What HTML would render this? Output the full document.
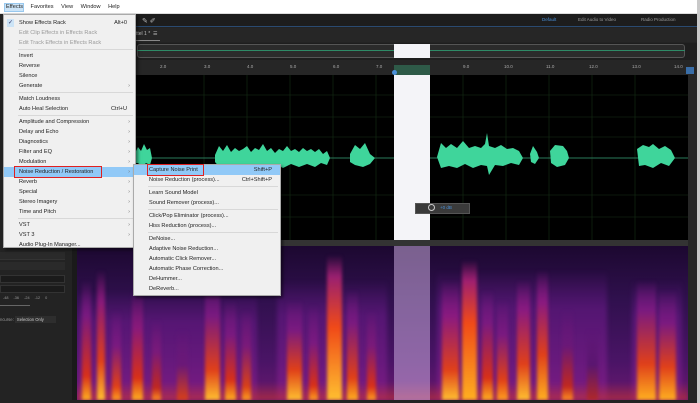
<!DOCTYPE html>
<html><head><meta charset="utf-8"><style>
*{margin:0;padding:0;box-sizing:border-box}
body{width:700px;height:403px;overflow:hidden;background:#fff;position:relative;font-family:"Liberation Sans",sans-serif}
.a{position:absolute}
.menu{position:absolute;background:#f0f0f0;border:1px solid #aaa;box-shadow:2px 2px 3px rgba(0,0,0,.5);font-size:5.6px;color:#222}
.it{position:absolute;left:0;right:0;height:10px;line-height:10px;padding-left:15px}
.it.d{color:#999}
.it .k{position:absolute;right:8px;top:0}
.it .r{position:absolute;right:5px;top:0;color:#777}
.sep{position:absolute;left:14px;right:2px;height:1px;background:#d8d8d8}
.s{position:absolute;bottom:0;filter:blur(1.5px)}
.p{position:absolute;bottom:0;filter:blur(2px);background:linear-gradient(transparent,#6a1a88 30%,#8a2090)}
</style></head><body>
<div class="a" style="left:0;top:0;width:700px;height:14px;background:#fff;border-bottom:1px solid #ddd"></div>
<div class="a" style="left:4px;top:3px;width:20px;height:9px;background:#cce4f7;border:1px solid #99c9ef"></div>
<div class="a" style="left:6px;top:4px;font-size:5.6px;color:#222;word-spacing:6px">Effects Favorites View Window Help</div>
<div class="a" style="left:0;top:14px;width:697px;height:389px;background:#232323"></div>
<div class="a" style="left:697px;top:0;width:3px;height:403px;background:#c9c9c9"></div>
<div class="a" style="left:135px;top:14px;width:562px;height:13px;background:#1d1d1d;border-bottom:1px solid #2a4a70"></div>
<div class="a" style="left:542px;top:17px;font-size:4.5px;color:#4a90d9">Default</div>
<div class="a" style="left:578px;top:17px;font-size:4.5px;color:#999">Edit Audio to Video</div>
<div class="a" style="left:641px;top:17px;font-size:4.5px;color:#999">Radio Production</div>
<div class="a" style="left:142px;top:17px;font-size:7px;color:#bbb">✎ ✐</div>
<div class="a" style="left:135px;top:28px;width:562px;height:14px;background:#262626"></div>
<div class="a" style="left:136px;top:31px;font-size:5px;color:#bbb">ttel 1 * &nbsp;☰</div>
<div class="a" style="left:135px;top:40px;width:25px;height:1px;background:#888"></div>
<div class="a" style="left:135px;top:43px;width:562px;height:17px;background:#1e1e1e"></div>
<div class="a" style="left:137px;top:44px;width:548px;height:14px;border:1px solid #555;border-radius:3px;background:#2b2b2b"></div>
<div class="a" style="left:137px;top:50px;width:548px;height:1px;background:#2e8a66"></div>
<div class="a" style="left:394px;top:44px;width:36px;height:14px;background:#f4f4f8"></div>
<div class="a" style="left:135px;top:60px;width:553px;height:15px;background:#262626"></div>
<div class="a" style="left:160px;top:64px;font-size:4.5px;color:#aaa">2.0</div>
<div class="a" style="left:204px;top:64px;font-size:4.5px;color:#aaa">3.0</div>
<div class="a" style="left:247px;top:64px;font-size:4.5px;color:#aaa">4.0</div>
<div class="a" style="left:290px;top:64px;font-size:4.5px;color:#aaa">5.0</div>
<div class="a" style="left:333px;top:64px;font-size:4.5px;color:#aaa">6.0</div>
<div class="a" style="left:376px;top:64px;font-size:4.5px;color:#aaa">7.0</div>
<div class="a" style="left:463px;top:64px;font-size:4.5px;color:#aaa">9.0</div>
<div class="a" style="left:504px;top:64px;font-size:4.5px;color:#aaa">10.0</div>
<div class="a" style="left:546px;top:64px;font-size:4.5px;color:#aaa">11.0</div>
<div class="a" style="left:589px;top:64px;font-size:4.5px;color:#aaa">12.0</div>
<div class="a" style="left:632px;top:64px;font-size:4.5px;color:#aaa">13.0</div>
<div class="a" style="left:674px;top:64px;font-size:4.5px;color:#aaa">14.0</div>
<div class="a" style="left:394px;top:65px;width:36px;height:10px;background:#2e5a48"></div>
<div class="a" style="left:392px;top:70px;width:5px;height:5px;border-radius:50%;background:#4a90d9"></div>
<div class="a" style="left:135px;top:75px;width:553px;height:165px;background:#000"></div>
<svg class="a" style="left:135px;top:75px" width="553" height="165">
<g stroke="#163016" stroke-width="0.6">
<line x1="0" y1="20" x2="553" y2="20"/><line x1="0" y1="42" x2="553" y2="42"/><line x1="0" y1="62" x2="553" y2="62"/><line x1="0" y1="120" x2="553" y2="120"/><line x1="0" y1="142" x2="553" y2="142"/>
<line x1="69" y1="0" x2="69" y2="165"/><line x1="112" y1="0" x2="112" y2="165"/><line x1="155" y1="0" x2="155" y2="165"/><line x1="198" y1="0" x2="198" y2="165"/><line x1="241" y1="0" x2="241" y2="165"/><line x1="328" y1="0" x2="328" y2="165"/><line x1="371" y1="0" x2="371" y2="165"/><line x1="414" y1="0" x2="414" y2="165"/><line x1="457" y1="0" x2="457" y2="165"/><line x1="500" y1="0" x2="500" y2="165"/>
</g>
<line x1="0" y1="83" x2="553" y2="83" stroke="#2a7a5a" stroke-width="1"/>
<g fill="#3fd59b">
<path d="M0 78 L3 72 L6 76 L9 69 L12 75 L15 73 L17 83 L15 90 L11 88 L7 92 L3 88 L0 88 Z"/>
<path d="M80 80 L84 71 L88 76 L92 70 L96 77 L100 73 L104 76 L108 74 L112 71 L116 77 L120 73 L124 75 L128 69 L132 76 L136 73 L140 78 L144 74 L148 76 L152 71 L156 76 L160 74 L164 77 L168 73 L172 76 L176 74 L180 77 L184 74 L188 79 L192 76 L195 83 L192 90 L186 88 L180 92 L172 89 L164 92 L156 89 L148 93 L140 89 L132 92 L124 89 L116 93 L108 89 L100 93 L92 90 L86 94 L80 87 Z"/>
<path d="M215 79 L220 70 L225 74 L230 68 L235 79 L240 83 L235 89 L228 92 L220 90 L215 87 Z"/>
<path d="M302 82 L306 68 L311 73 L316 69 L322 73 L328 66 L334 73 L340 71 L346 73 L350 69 L352 58 L354 71 L360 73 L366 70 L372 74 L378 73 L384 76 L388 83 L384 90 L376 88 L368 91 L360 90 L354 100 L352 91 L346 90 L338 93 L330 89 L322 93 L314 91 L306 93 Z"/>
<path d="M395 79 L398 71 L402 77 L404 83 L400 89 L396 87 Z"/>
<path d="M415 76 L420 70 L428 71 L432 76 L434 83 L430 90 L422 92 L416 88 Z"/>
<path d="M502 74 L508 70 L514 72 L518 69 L524 74 L530 71 L536 75 L540 83 L534 91 L526 88 L518 93 L510 90 L504 91 Z"/>
</g>
</svg>
<div class="a" style="left:394px;top:75px;width:36px;height:165px;background:#f4f4f8"></div>
<div class="a" style="left:415px;top:203px;width:55px;height:11px;background:#3a3a3a;border:1px solid #555"></div>
<div class="a" style="left:428px;top:204px;width:7px;height:7px;border:1px solid #ccc;border-radius:50%"></div>
<div class="a" style="left:440px;top:205px;font-size:4.5px;color:#4a90d9">+0 dB</div>
<div class="a" style="left:688px;top:60px;width:9px;height:340px;background:#262626"></div>
<div class="a" style="left:686px;top:67px;width:8px;height:7px;background:#3a6ea8"></div>
<div class="a" style="left:77px;top:240px;width:611px;height:6px;background:#333"></div>
<div class="a" style="left:77px;top:246px;width:611px;height:154px;overflow:hidden;background:linear-gradient(#1c0830,#30104e 35%,#4a1466 75%,#6a1870)">
<div class="p" style="left:0;width:180px;height:110px;opacity:.6"></div>
<div class="p" style="left:200px;width:110px;height:120px;opacity:.6"></div>
<div class="p" style="left:360px;width:170px;height:130px;opacity:.6"></div>
<div class="p" style="left:555px;width:50px;height:120px;opacity:.6"></div>
<div class="s" style="left:0;width:611px;height:18px;background:linear-gradient(transparent,rgba(220,60,30,.5))"></div>
<div class="s" style="left:5px;width:9px;height:120px;background:linear-gradient(transparent,#7a1a80 30%,#d8301a 80%,#ffb020)"></div>
<div class="s" style="left:20px;width:8px;height:130px;background:linear-gradient(transparent,#8a1a7a 25%,#e0401a 70%,#ffc030)"></div>
<div class="s" style="left:35px;width:9px;height:90px;background:linear-gradient(transparent,#7a1a80 40%,#e04018 85%,#ffa020)"></div>
<div class="s" style="left:55px;width:11px;height:110px;background:linear-gradient(transparent,#8a1a7a 35%,#d83018 80%,#ffb020)"></div>
<div class="s" style="left:75px;width:9px;height:80px;background:linear-gradient(transparent,#7a1a7a 40%,#c02820 85%,#ff9020)"></div>
<div class="s" style="left:100px;width:11px;height:70px;background:linear-gradient(transparent,#6a1878 50%,#d84018)"></div>
<div class="s" style="left:128px;width:15px;height:120px;background:linear-gradient(transparent,#7a1a80 30%,#e0401a 75%,#ffc030)"></div>
<div class="s" style="left:148px;width:11px;height:100px;background:linear-gradient(transparent,#7a1a80 35%,#d83018 80%,#ffb020)"></div>
<div class="s" style="left:165px;width:9px;height:90px;background:linear-gradient(transparent,#7a1a7a 40%,#d84018 85%,#ffa020)"></div>
<div class="s" style="left:210px;width:15px;height:100px;background:linear-gradient(transparent,#7a1a80 30%,#e04018 70%,#ffc030)"></div>
<div class="s" style="left:232px;width:9px;height:95px;background:linear-gradient(transparent,#7a1a80 40%,#d83018 85%,#ffa020)"></div>
<div class="s" style="left:250px;width:15px;height:145px;background:linear-gradient(transparent,#9a2070 15%,#f04a18 50%,#ffc030)"></div>
<div class="s" style="left:270px;width:11px;height:110px;background:linear-gradient(transparent,#7a1a80 30%,#e04018 80%,#ffb020)"></div>
<div class="s" style="left:290px;width:9px;height:90px;background:linear-gradient(transparent,#7a1a7a 40%,#d83018 85%,#ffa020)"></div>
<div class="a" style="left:317px;bottom:0;width:36px;height:154px;background:rgba(200,170,220,.55)"></div>
<div class="s" style="left:365px;width:17px;height:120px;background:linear-gradient(transparent,#8a1a80 30%,#e0401a 75%,#ffc030)"></div>
<div class="s" style="left:385px;width:15px;height:140px;background:linear-gradient(transparent,#a02070 15%,#f04a18 45%,#ffb020)"></div>
<div class="s" style="left:405px;width:11px;height:110px;background:linear-gradient(transparent,#7a1a80 30%,#d83018 80%,#ffb020)"></div>
<div class="s" style="left:420px;width:11px;height:100px;background:linear-gradient(transparent,#7a1a80 35%,#e04018 80%,#ffa020)"></div>
<div class="s" style="left:440px;width:13px;height:120px;background:linear-gradient(transparent,#8a1a80 25%,#e0401a 70%,#ffc030)"></div>
<div class="s" style="left:460px;width:11px;height:130px;background:linear-gradient(transparent,#8a1a80 25%,#e0401a 65%,#ffb020)"></div>
<div class="s" style="left:485px;width:11px;height:90px;background:linear-gradient(transparent,#6a1878 40%,#c02820 85%,#ff9020)"></div>
<div class="s" style="left:510px;width:11px;height:70px;background:linear-gradient(transparent,#5a1670 50%,#b02828)"></div>
<div class="s" style="left:560px;width:19px;height:120px;background:linear-gradient(transparent,#7a1a80 25%,#e0401a 70%,#ffb020)"></div>
<div class="s" style="left:582px;width:17px;height:110px;background:linear-gradient(transparent,#7a1a80 30%,#e0401a 70%,#ffb020)"></div>
</div>
<div class="a" style="left:0;top:252px;width:65px;height:8px;background:#2a2a2a;border-bottom:1px solid #333"></div>
<div class="a" style="left:0;top:262px;width:65px;height:8px;background:#2a2a2a"></div>
<div class="a" style="left:0;top:275px;width:65px;height:8px;background:#1b1b1b;border:1px solid #333"></div>
<div class="a" style="left:0;top:285px;width:65px;height:8px;background:#1b1b1b;border:1px solid #333"></div>
<div class="a" style="left:3px;top:296px;font-size:3.8px;color:#999;word-spacing:4px">-48 -36 -24 -12 0</div>
<div class="a" style="left:0;top:305px;width:30px;height:1px;background:#666"></div>
<div class="a" style="left:0;top:317px;font-size:4.2px;color:#999">ncurse: <span style="color:#ccc;background:#2e2e2e;padding:1px 12px 1px 2px">Selection Only</span></div>
<div class="a" style="left:72px;top:246px;width:5px;height:154px;background:#1a1a1a"></div>
<div class="menu" style="left:3px;top:14px;width:133px;height:234px">
<div class="a" style="left:3px;top:4px;width:7px;height:8px;background:#cce4f7;color:#336;font-size:6px;line-height:8px;text-align:center">✓</div>
<div class="it" style="top:3px">Show Effects Rack<span class="k">Alt+0</span></div>
<div class="it d" style="top:13px">Edit Clip Effects in Effects Rack</div>
<div class="it d" style="top:23px">Edit Track Effects in Effects Rack</div>
<div class="sep" style="top:34px"></div>
<div class="it" style="top:36px">Invert</div>
<div class="it" style="top:46px">Reverse</div>
<div class="it" style="top:56px">Silence</div>
<div class="it" style="top:66px">Generate<span class="r">›</span></div>
<div class="sep" style="top:77px"></div>
<div class="it" style="top:79px">Match Loudness</div>
<div class="it" style="top:89px">Auto Heal Selection<span class="k">Ctrl+U</span></div>
<div class="sep" style="top:100px"></div>
<div class="it" style="top:102px">Amplitude and Compression<span class="r">›</span></div>
<div class="it" style="top:112px">Delay and Echo<span class="r">›</span></div>
<div class="it" style="top:122px">Diagnostics<span class="r">›</span></div>
<div class="it" style="top:132px">Filter and EQ<span class="r">›</span></div>
<div class="it" style="top:142px">Modulation<span class="r">›</span></div>
<div class="it" style="top:152px;background:#91c9f7">Noise Reduction / Restoration<span class="r">›</span></div>
<div class="a" style="left:10px;top:151px;width:88px;height:12px;border:1.5px solid #e02020"></div>
<div class="it" style="top:162px">Reverb<span class="r">›</span></div>
<div class="it" style="top:172px">Special<span class="r">›</span></div>
<div class="it" style="top:182px">Stereo Imagery<span class="r">›</span></div>
<div class="it" style="top:192px">Time and Pitch<span class="r">›</span></div>
<div class="sep" style="top:203px"></div>
<div class="it" style="top:205px">VST<span class="r">›</span></div>
<div class="it" style="top:215px">VST 3<span class="r">›</span></div>
<div class="it" style="top:225px">Audio Plug-In Manager...</div>
</div>
<div class="menu" style="left:133px;top:164px;width:148px;height:132px">
<div class="it" style="top:0;background:#91c9f7">Capture Noise Print<span class="k">Shift+P</span></div>
<div class="a" style="left:13px;top:-1px;width:57px;height:12px;border:1.5px solid #e02020"></div>
<div class="it" style="top:10px">Noise Reduction (process)...<span class="k">Ctrl+Shift+P</span></div>
<div class="sep" style="top:21px"></div>
<div class="it" style="top:23px">Learn Sound Model</div>
<div class="it" style="top:33px">Sound Remover (process)...</div>
<div class="sep" style="top:44px"></div>
<div class="it" style="top:46px">Click/Pop Eliminator (process)...</div>
<div class="it" style="top:56px">Hiss Reduction (process)...</div>
<div class="sep" style="top:67px"></div>
<div class="it" style="top:69px">DeNoise...</div>
<div class="it" style="top:79px">Adaptive Noise Reduction...</div>
<div class="it" style="top:89px">Automatic Click Remover...</div>
<div class="it" style="top:99px">Automatic Phase Correction...</div>
<div class="it" style="top:109px">DeHummer...</div>
<div class="it" style="top:119px">DeReverb...</div>
</div>
</body></html>
